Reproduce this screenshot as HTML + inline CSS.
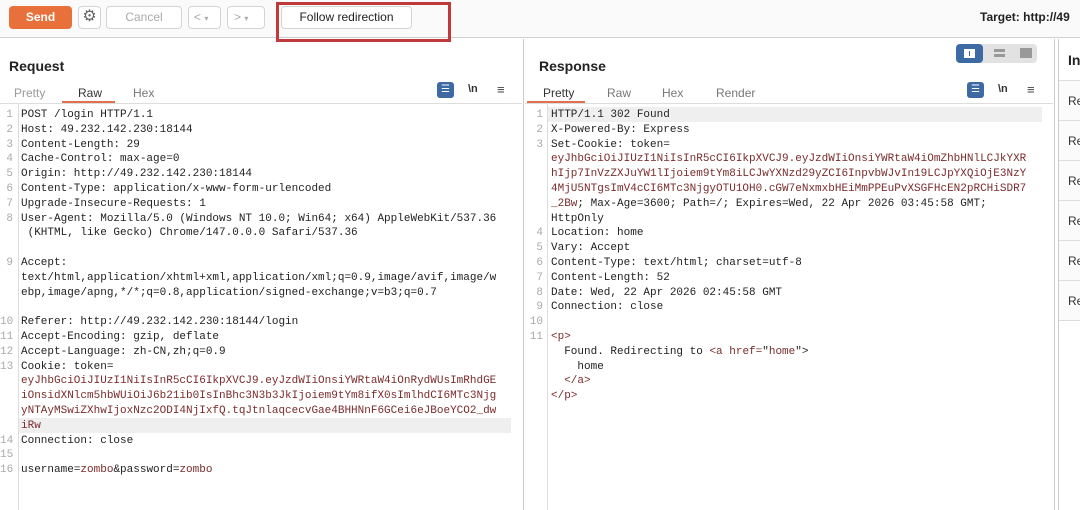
<!DOCTYPE html>
<html><head><meta charset="utf-8"><style>
*{margin:0;padding:0;box-sizing:border-box}
body{width:1080px;height:510px;overflow:hidden;background:#fff;font-family:"Liberation Sans",sans-serif;position:relative;color:#222}
.abs{position:absolute}
.btn{position:absolute;border:1px solid #d4d4d4;border-radius:4px;background:#fff;font-size:12px;color:#aaa;text-align:center}
.code{position:absolute;font-family:"Liberation Mono",monospace;font-size:11px;line-height:14.8px;white-space:pre;color:#222}
.ln{position:absolute;font-family:"Liberation Mono",monospace;font-size:11px;line-height:14.8px;white-space:pre;color:#aaa;text-align:right}
.r{color:#7a2c2c}
.tab{position:absolute;font-size:12px;color:#777}
.hl{position:absolute;background:#efefef}
</style></head><body>
<div class="abs" style="left:0;top:0;width:1080px;height:38px;background:#fafafa;border-bottom:1px solid #d0d0d0"></div>
<div class="abs" style="left:9px;top:6px;width:63px;height:23px;background:#e8703a;border-radius:4px;color:#fff;font-weight:bold;font-size:12px;text-align:center;line-height:23px">Send</div>
<div class="btn" style="left:78px;top:6px;width:23px;height:23px;color:#666;font-size:16px;line-height:20px">⚙</div>
<div class="btn" style="left:106px;top:6px;width:76px;height:23px;line-height:21px">Cancel</div>
<div class="btn" style="left:188px;top:6px;width:33px;height:23px;line-height:21px;text-align:left;padding-left:5px">&lt; <span style="font-size:8px">▾</span></div>
<div class="btn" style="left:227px;top:6px;width:38px;height:23px;line-height:21px;text-align:left;padding-left:6px">&gt; <span style="font-size:8px">▾</span></div>
<div class="btn" style="left:281px;top:6px;width:131px;height:23px;line-height:21px;color:#222;font-size:12px">Follow redirection</div>
<div class="abs" style="left:276px;top:2px;width:175px;height:40px;border:3px solid #c0393b"></div>
<div class="abs" style="left:980px;top:10px;font-size:12px;font-weight:bold;color:#222;white-space:nowrap">Target: http://49</div>

<div class="abs" style="left:523px;top:39px;width:1px;height:471px;background:#ccc"></div>
<div class="abs" style="left:1054px;top:39px;width:1px;height:471px;background:#ccc"></div>
<div class="abs" style="left:1058px;top:39px;width:1px;height:471px;background:#ccc"></div>

<div class="abs" style="left:9px;top:58px;font-size:14px;font-weight:bold">Request</div>
<div class="tab" style="left:14px;top:86px;color:#999">Pretty</div>
<div class="tab" style="left:78px;top:86px;color:#333">Raw</div>
<div class="abs" style="left:62px;top:101px;width:53px;height:2px;background:#e07050"></div>
<div class="tab" style="left:133px;top:86px">Hex</div>
<div class="abs" style="left:0;top:103px;width:522px;height:1px;background:#ddd"></div>
<div class="abs" style="left:437px;top:82px;width:17px;height:16px;background:#3d6aa3;border-radius:3px;color:#fff;font-size:10px;text-align:center;line-height:16px">☰</div>
<div class="abs" style="left:468px;top:83px;font-size:11px;font-weight:bold;color:#333">\n</div>
<div class="abs" style="left:497px;top:82px;font-size:13px;color:#444">≡</div>
<div class="abs" style="left:18px;top:104px;width:1px;height:406px;background:#ddd"></div>
<div class="hl" style="left:19px;top:418px;width:492px;height:15px"></div>
<div class="ln" style="left:0;top:108px;width:13px">1
2
3
4
5
6
7
8


9



10
11
12
13




14
15
16</div>
<div class="code" style="left:21px;top:108px">POST /login HTTP/1.1
Host: 49.232.142.230:18144
Content-Length: 29
Cache-Control: max-age=0
Origin: http://49.232.142.230:18144
Content-Type: application/x-www-form-urlencoded
Upgrade-Insecure-Requests: 1
User-Agent: Mozilla/5.0 (Windows NT 10.0; Win64; x64) AppleWebKit/537.36
 (KHTML, like Gecko) Chrome/147.0.0.0 Safari/537.36

Accept:
text/html,application/xhtml+xml,application/xml;q=0.9,image/avif,image/w
ebp,image/apng,*/*;q=0.8,application/signed-exchange;v=b3;q=0.7

Referer: http://49.232.142.230:18144/login
Accept-Encoding: gzip, deflate
Accept-Language: zh-CN,zh;q=0.9
Cookie: token=
<span class="r">eyJhbGciOiJIUzI1NiIsInR5cCI6IkpXVCJ9.eyJzdWIiOnsiYWRtaW4iOnRydWUsImRhdGE
iOnsidXNlcm5hbWUiOiJ6b21ib0IsInBhc3N3b3JkIjoiem9tYm8ifX0sImlhdCI6MTc3Njg
yNTAyMSwiZXhwIjoxNzc2ODI4NjIxfQ.tqJtnlaqcecvGae4BHHNnF6GCei6eJBoeYCO2_dw
iRw</span>
Connection: close

username=<span class="r">zombo</span>&amp;password=<span class="r">zombo</span></div>

<div class="abs" style="left:539px;top:58px;font-size:14px;font-weight:bold">Response</div>
<div class="abs" style="left:956px;top:44px;width:81px;height:19px;background:#e2e2e2;border-radius:4px"></div>
<div class="abs" style="left:956px;top:44px;width:27px;height:19px;background:#3d6aa3;border-radius:4px"></div>
<div class="abs" style="left:964px;top:49px;width:11px;height:9px;border:2px solid #fff;border-left-width:5px;border-right-width:5px;background:#3d6aa3"></div>
<div class="abs" style="left:994px;top:49px;width:11px;height:3px;background:#999"></div>
<div class="abs" style="left:994px;top:54px;width:11px;height:3px;background:#999"></div>
<div class="abs" style="left:1020px;top:48px;width:12px;height:10px;background:#999"></div>
<div class="tab" style="left:543px;top:86px;color:#333">Pretty</div>
<div class="abs" style="left:527px;top:101px;width:58px;height:2px;background:#e07050"></div>
<div class="tab" style="left:607px;top:86px">Raw</div>
<div class="tab" style="left:662px;top:86px">Hex</div>
<div class="tab" style="left:716px;top:86px">Render</div>
<div class="abs" style="left:525px;top:103px;width:528px;height:1px;background:#ddd"></div>
<div class="abs" style="left:967px;top:82px;width:17px;height:16px;background:#3d6aa3;border-radius:3px;color:#fff;font-size:10px;text-align:center;line-height:16px">☰</div>
<div class="abs" style="left:998px;top:83px;font-size:11px;font-weight:bold;color:#333">\n</div>
<div class="abs" style="left:1027px;top:82px;font-size:13px;color:#444">≡</div>
<div class="abs" style="left:547px;top:104px;width:1px;height:406px;background:#ddd"></div>
<div class="hl" style="left:548px;top:107px;width:494px;height:15px"></div>
<div class="ln" style="left:525px;top:108px;width:18px">1
2
3





4
5
6
7
8
9
10
11</div>
<div class="code" style="left:551px;top:108px">HTTP/1.1 302 Found
X-Powered-By: Express
Set-Cookie: token=
<span class="r">eyJhbGciOiJIUzI1NiIsInR5cCI6IkpXVCJ9.eyJzdWIiOnsiYWRtaW4iOmZhbHNlLCJkYXR
hIjp7InVzZXJuYW1lIjoiem9tYm8iLCJwYXNzd29yZCI6InpvbWJvIn19LCJpYXQiOjE3NzY
4MjU5NTgsImV4cCI6MTc3NjgyOTU1OH0.cGW7eNxmxbHEiMmPPEuPvXSGFHcEN2pRCHiSDR7
_2Bw</span>; Max-Age=3600; Path=/; Expires=Wed, 22 Apr 2026 03:45:58 GMT;
HttpOnly
Location: home
Vary: Accept
Content-Type: text/html; charset=utf-8
Content-Length: 52
Date: Wed, 22 Apr 2026 02:45:58 GMT
Connection: close

<span class="r">&lt;p&gt;</span>
  Found. Redirecting to <span class="r">&lt;a href=</span>"<span class="r">home</span>"&gt;
    home
  <span class="r">&lt;/a&gt;</span>
<span class="r">&lt;/p&gt;</span></div>

<div class="abs" style="left:1068px;top:52px;font-size:14px;font-weight:bold">In</div>
<div class="abs" style="left:1059px;top:80px;width:21px;height:240px;background:#fbfbfb"></div>
<div class="abs" style="left:1059px;top:80px;width:21px;height:1px;background:#ddd"></div>
<div class="abs" style="left:1059px;top:120px;width:21px;height:1px;background:#ddd"></div>
<div class="abs" style="left:1059px;top:160px;width:21px;height:1px;background:#ddd"></div>
<div class="abs" style="left:1059px;top:200px;width:21px;height:1px;background:#ddd"></div>
<div class="abs" style="left:1059px;top:240px;width:21px;height:1px;background:#ddd"></div>
<div class="abs" style="left:1059px;top:280px;width:21px;height:1px;background:#ddd"></div>
<div class="abs" style="left:1059px;top:320px;width:21px;height:1px;background:#ddd"></div>
<div class="abs" style="left:1068px;top:81px;font-size:12px;line-height:40px;color:#333">Re<br>Re<br>Re<br>Re<br>Re<br>Re</div>
</body></html>
